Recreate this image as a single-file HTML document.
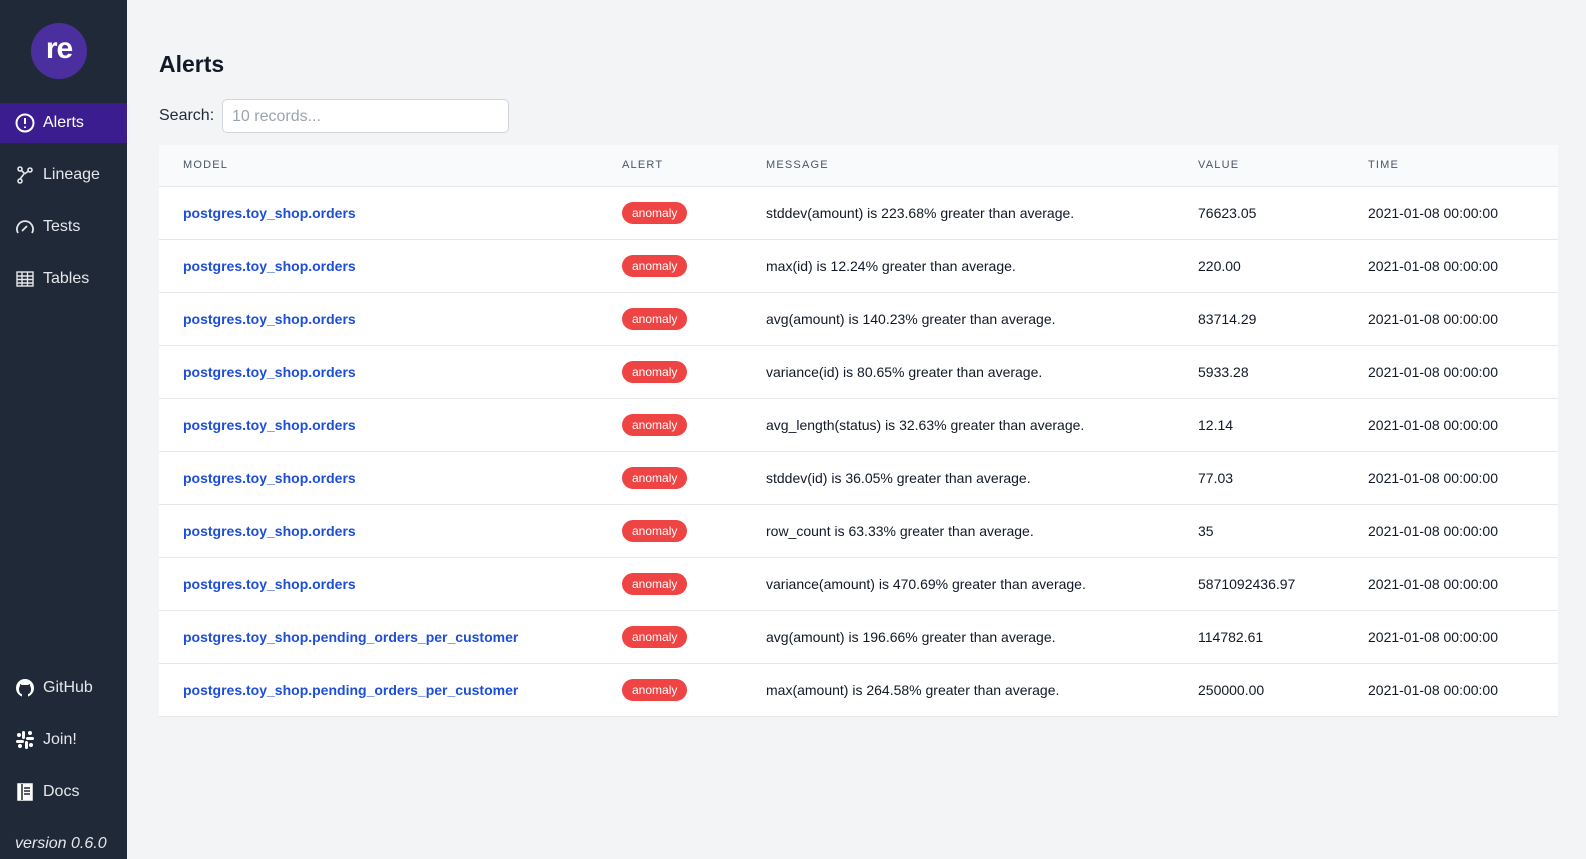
<!DOCTYPE html>
<html><head><meta charset="utf-8"><style>
*{box-sizing:border-box;margin:0;padding:0}
body{width:1586px;height:859px;background:#f3f4f6;font-family:"Liberation Sans",sans-serif;position:relative;overflow:hidden}
.sb{position:absolute;left:0;top:0;width:127px;height:859px;background:#1f2937;color:#e5e7eb}
.logo{position:absolute;left:31px;top:23px;width:56px;height:56px;border-radius:50%;background:#4c2f9e;color:#fff;font-weight:bold;font-size:30px;text-align:center;line-height:52px;letter-spacing:-1px}
.it{position:absolute;left:0;width:127px;height:40px;display:flex;align-items:center;padding-left:15px;font-size:16px;color:#e5e7eb}
.it svg{width:20px;height:20px;margin-right:8px}
.act{background:#3b1d8f;color:#fff}
.ver{position:absolute;left:15px;top:835px;font-style:italic;font-size:16px;color:#e5e7eb}
h1{position:absolute;left:159px;top:51px;font-size:23px;font-weight:bold;color:#111827}
.sl{position:absolute;left:159px;top:107px;font-size:16px;color:#1f2937}
.in{position:absolute;left:222px;top:99px;width:287px;height:34px;background:#fff;border:1px solid #d1d5db;border-radius:5px;font-size:16px;color:#9ca3af;padding:8px 9px}
table{position:absolute;left:159px;top:145px;width:1399px;border-collapse:collapse;background:#fff}
th{background:#f9fafb;height:41px;text-align:left;font-size:11px;font-weight:normal;letter-spacing:1.2px;color:#4b5563;border-bottom:1px solid #e5e7eb}
td{height:53px;font-size:14px;color:#111827;border-bottom:1px solid #e5e7eb}
td a{color:#1d4ed8;font-weight:bold;text-decoration:none}
.b{display:inline-block;background:#ef4444;color:#fff;font-size:12px;border-radius:12px;padding:4px 10px}
</style></head><body>
<div class="sb">
<div class="logo">re</div>
<div class="it act" style="top:103px"><svg viewBox="0 0 20 20" fill="none" stroke="#fff" stroke-width="2"><circle cx="10" cy="10" r="8.5"/><path d="M10 5v6M10 13.5v1.5"/></svg>Alerts</div>
<div class="it" style="top:155px"><svg viewBox="0 0 20 20" fill="none" stroke="#e5e7eb" stroke-width="1.6"><circle cx="5" cy="4" r="2"/><circle cx="15" cy="5" r="2"/><circle cx="5" cy="16" r="2"/><path d="M6.5 5.5l3 3M13.5 6l-4 3M5 14v-0l4-5"/></svg>Lineage</div>
<div class="it" style="top:207px"><svg viewBox="0 0 20 20" fill="none" stroke="#e5e7eb" stroke-width="1.8"><path d="M3 16A8 8 0 1 1 17 16"/><path d="M7 14l5-5"/></svg>Tests</div>
<div class="it" style="top:259px"><svg viewBox="0 0 20 20" fill="none" stroke="#e5e7eb" stroke-width="1.4"><rect x="2" y="3" width="16" height="14"/><path d="M2 7h16M2 10.5h16M2 14h16M7 3v14M12.5 3v14"/></svg>Tables</div>
<div class="it" style="top:668px"><svg viewBox="0 0 20 20"><circle cx="10" cy="10" r="9" fill="#fff"/><path d="M7 19v-3c-1-0-3-1-3-5 0-2 1-3 1-3V6l2 1h6l2-1v2s1 1 1 3c0 4-2 5-3 5v3z" fill="#1f2937"/></svg>GitHub</div>
<div class="it" style="top:720px"><svg viewBox="0 0 20 20" fill="#fff"><rect x="7" y="1" width="3" height="8" rx="1.5"/><rect x="10" y="11" width="3" height="8" rx="1.5"/><rect x="1" y="10" width="8" height="3" rx="1.5"/><rect x="11" y="7" width="8" height="3" rx="1.5"/><circle cx="15" cy="3" r="2"/><circle cx="4" cy="5" r="2"/><circle cx="5" cy="16" r="2"/><circle cx="16" cy="15" r="2"/></svg>Join!</div>
<div class="it" style="top:772px"><svg viewBox="0 0 20 20" fill="none" stroke="#fff" stroke-width="1.5"><rect x="3" y="2" width="14" height="16" fill="#fff"/><path d="M7 2v16" stroke="#1f2937"/><path d="M9 6h6M9 9h6M9 12h6" stroke="#1f2937"/></svg>Docs</div>
<div class="ver">version 0.6.0</div>
</div>
<h1>Alerts</h1>
<div class="sl">Search:</div>
<div class="in">10 records...</div>
<table>
<tr><th style="padding-left:24px;width:463px">MODEL</th><th style="width:144px">ALERT</th><th style="width:432px">MESSAGE</th><th style="width:170px">VALUE</th><th>TIME</th></tr>
<tr><td style="padding-left:24px"><a>postgres.toy_shop.orders</a></td><td><span class="b">anomaly</span></td><td>stddev(amount) is 223.68% greater than average.</td><td>76623.05</td><td>2021-01-08 00:00:00</td></tr>
<tr><td style="padding-left:24px"><a>postgres.toy_shop.orders</a></td><td><span class="b">anomaly</span></td><td>max(id) is 12.24% greater than average.</td><td>220.00</td><td>2021-01-08 00:00:00</td></tr>
<tr><td style="padding-left:24px"><a>postgres.toy_shop.orders</a></td><td><span class="b">anomaly</span></td><td>avg(amount) is 140.23% greater than average.</td><td>83714.29</td><td>2021-01-08 00:00:00</td></tr>
<tr><td style="padding-left:24px"><a>postgres.toy_shop.orders</a></td><td><span class="b">anomaly</span></td><td>variance(id) is 80.65% greater than average.</td><td>5933.28</td><td>2021-01-08 00:00:00</td></tr>
<tr><td style="padding-left:24px"><a>postgres.toy_shop.orders</a></td><td><span class="b">anomaly</span></td><td>avg_length(status) is 32.63% greater than average.</td><td>12.14</td><td>2021-01-08 00:00:00</td></tr>
<tr><td style="padding-left:24px"><a>postgres.toy_shop.orders</a></td><td><span class="b">anomaly</span></td><td>stddev(id) is 36.05% greater than average.</td><td>77.03</td><td>2021-01-08 00:00:00</td></tr>
<tr><td style="padding-left:24px"><a>postgres.toy_shop.orders</a></td><td><span class="b">anomaly</span></td><td>row_count is 63.33% greater than average.</td><td>35</td><td>2021-01-08 00:00:00</td></tr>
<tr><td style="padding-left:24px"><a>postgres.toy_shop.orders</a></td><td><span class="b">anomaly</span></td><td>variance(amount) is 470.69% greater than average.</td><td>5871092436.97</td><td>2021-01-08 00:00:00</td></tr>
<tr><td style="padding-left:24px"><a>postgres.toy_shop.pending_orders_per_customer</a></td><td><span class="b">anomaly</span></td><td>avg(amount) is 196.66% greater than average.</td><td>114782.61</td><td>2021-01-08 00:00:00</td></tr>
<tr><td style="padding-left:24px"><a>postgres.toy_shop.pending_orders_per_customer</a></td><td><span class="b">anomaly</span></td><td>max(amount) is 264.58% greater than average.</td><td>250000.00</td><td>2021-01-08 00:00:00</td></tr>
</table>
</body></html>
